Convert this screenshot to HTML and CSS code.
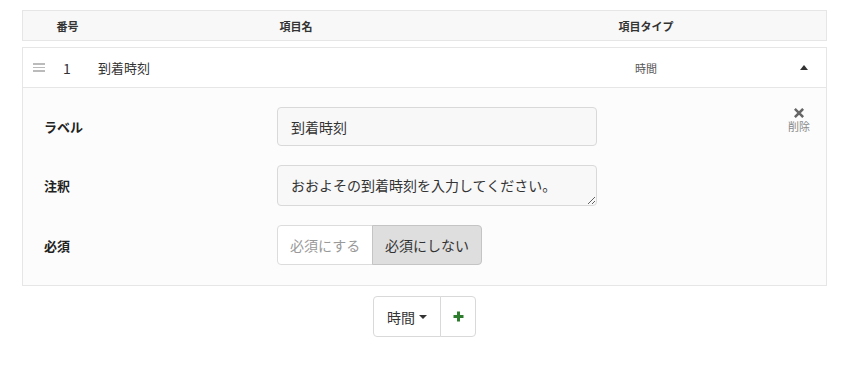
FILE: index.html
```html
<!DOCTYPE html>
<html>
<head>
<meta charset="utf-8">
<link rel="stylesheet" href="styles.css">
</head>
<body>
<div class="fields">
  <div class="head">
    <div class="hcell">番号</div>
    <div class="hcell">項目名</div>
    <div class="hcell">項目タイプ</div>
    <div></div>
  </div>

  <div class="item">
    <div class="item-row">
      <div class="handle"><span></span><span></span><span></span></div>
      <div class="num">1</div>
      <div class="name">到着時刻</div>
      <div class="type">時間</div>
      <div class="caret"></div>
    </div>
    <div class="item-body">
      <div class="form">
        <div class="frow">
          <label class="flabel">ラベル</label>
          <input class="finput" type="text" value="到着時刻">
        </div>
        <div class="frow">
          <label class="flabel">注釈</label>
          <textarea class="finput farea">おおよその到着時刻を入力してください。</textarea>
        </div>
        <div class="frow">
          <label class="flabel">必須</label>
          <div class="toggle">
            <button class="tbtn">必須にする</button>
            <button class="tbtn on">必須にしない</button>
          </div>
        </div>
      </div>
      <div class="remove">
        <svg width="10" height="10" viewBox="0 0 10 10"><path d="M1.8 1.8 L8.2 8.2 M8.2 1.8 L1.8 8.2" stroke="#666" stroke-width="2.6" stroke-linecap="square"/></svg>
        <div class="remove-text">削除</div>
      </div>
    </div>
  </div>

  <div class="add">
    <div class="addgroup">
      <button class="abtn">時間 <span class="down"></span></button>
      <button class="abtn plus">
        <svg width="11" height="11" viewBox="0 0 11 11"><path d="M5.5 0.5 V10.5 M0.5 5.5 H10.5" stroke="#2e7d2e" stroke-width="3"/></svg>
      </button>
    </div>
  </div>
</div>
</body>
</html>
```

FILE: styles.css
```css
* {box-sizing: border-box;}
body {margin: 0; background: #fff; font-family: "Noto Sans CJK JP", "Noto Sans", sans-serif; color: #333;}
.fields {margin: 10px 0 0 22px; width: 805px;}

.head {display: grid; grid-template-columns: 89px 368px 332px 1fr; height: 31px; align-items: center; background: #f8f8f8; border: 1px solid #e6e6e6; font-size: 11px; font-weight: bold; color: #333;}
.hcell {text-align: center;}

.item {margin-top: 6px; border: 1px solid #e6e6e6;}
.item-row {display: grid; grid-template-columns: 34px 20px 424px 290px 1fr; height: 40px; align-items: center; background: #fff; border-bottom: 1px solid #e6e6e6;}
.handle {padding-left: 10px; display: flex; flex-direction: column; gap: 2px;}
.handle span {display: block; width: 12px; height: 1.5px; background: #bbb;}
.num {text-align: center; font-size: 14px; color: #333;}
.name {padding-left: 21px; font-size: 13px; color: #333;}
.type {text-align: center; font-size: 11px; color: #555;}
.caret {padding-left: 9px;}
.caret::before {content: ""; display: block; width: 0; height: 0; border-left: 4px solid transparent; border-right: 4px solid transparent; border-bottom: 5px solid #333;}

.item-body {display: flex; justify-content: space-between; background: #fcfcfc; padding: 19px 14px 20px 21px;}
.form {display: flex; flex-direction: column; gap: 19px;}
.frow {display: flex; align-items: center;}
.flabel {width: 233px; font-size: 13px; font-weight: bold; color: #222;}
.finput {width: 320px; height: 39px; padding: 0 13px; background: #f8f8f8; border: 1px solid #d9d9d9; border-radius: 4px; font-family: inherit; font-size: 14px; color: #333; outline: 0;}
.farea {height: 41px; padding: 9px 13px 0; resize: vertical; line-height: 20px; overflow: hidden;}
.toggle {display: flex;}
.tbtn {height: 40px; padding: 0 12px; white-space: nowrap; font-family: inherit; font-size: 14px; background: #fff; border: 1px solid #dcdcdc; color: #999; border-radius: 4px 0 0 4px;}
.tbtn.on {background: #dedede; border-color: #c4c4c4; color: #333; border-radius: 0 4px 4px 0; margin-left: -1px; width: 110px;}
.tbtn:first-child {width: 96px;}

.remove {display: flex; flex-direction: column; align-items: center; width: 26px; padding-top: 1px;}
.remove-text {font-size: 11px; color: #888; margin-top: 0;}

.add {display: flex; justify-content: center; padding-top: 10px;}
.addgroup {display: flex; height: 41px;}
.abtn {height: 41px; background: #fff; border: 1px solid #d9d9d9; white-space: nowrap; font-family: inherit; font-size: 14px; color: #333; display: flex; align-items: center; justify-content: center;}
.abtn:first-child {width: 68px; border-radius: 4px 0 0 4px; gap: 4px;}
.abtn.plus {width: 36px; border-radius: 0 4px 4px 0; margin-left: -1px;}
.down {display: inline-block; width: 0; height: 0; border-left: 4px solid transparent; border-right: 4px solid transparent; border-top: 4px solid #333;}
```
